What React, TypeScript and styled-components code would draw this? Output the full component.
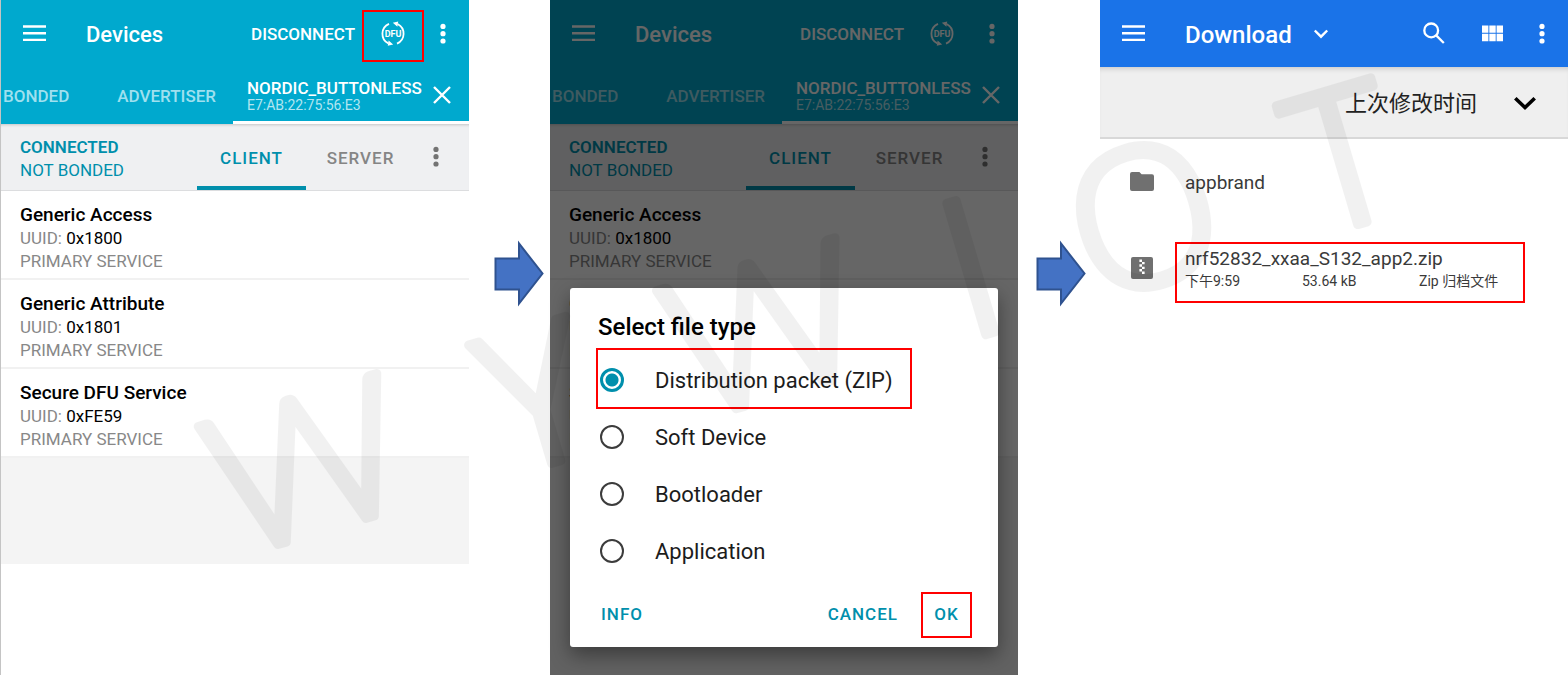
import React from 'react';
import styled, { createGlobalStyle, css } from 'styled-components';

const GlobalStyle = createGlobalStyle`
  *, *::before, *::after { box-sizing: border-box; }
  body {
    margin: 0;
    background: #fff;
    color: #000;
    font-family: Roboto, "Noto Sans CJK SC", sans-serif;
  }
  button, select, input { font: inherit; color: inherit; }
  h1, h2, h3, p, ul { margin: 0; padding: 0; }
  ul { list-style: none; }
`;

const Page = styled.main`
  position: relative;
  display: grid;
  grid-template-columns: minmax(0, 469fr) 81px minmax(0, 468fr) 82px minmax(0, 468fr);
  min-height: 100vh;
  overflow: hidden;
`;

/* ---------- shared controls ---------- */

const highlight = css`
  &::after {
    content: '';
    position: absolute;
    border: 2px solid #ff0000;
    pointer-events: none;
  }
`;

const IconButton = styled.button<{ $width: number }>`
  position: relative;
  display: flex;
  align-items: center;
  justify-content: center;
  flex: none;
  width: ${(p) => p.$width}px;
  height: 46px;
  padding: 0;
  border: 0;
  background: none;
`;

const DfuButton = styled(IconButton)<{ $marked?: boolean }>`
  ${(p) => p.$marked && highlight}
  &::after { inset: -1px 0 -5px; }
`;

const Toolbar = styled.header<{ $color: string }>`
  display: flex;
  align-items: center;
  height: 67px;
  padding: 0 7px 0 10px;
  background: ${(p) => p.$color};
  color: #fff;
`;

const ToolbarTitle = styled.h1<{ $size: number }>`
  margin-left: 28px;
  padding-top: 2px;
  font-size: ${(p) => p.$size}px;
  font-weight: 500;
  line-height: 30px;
`;

const Spacer = styled.span`
  flex: 1;
`;

const TextAction = styled.button`
  margin-right: 7px;
  padding: 0;
  border: 0;
  background: none;
  font-size: 17px;
  font-weight: 500;
  line-height: 24px;
`;

/* ---------- device screens ---------- */

const Column = styled.section<{ $ruled?: boolean }>`
  display: grid;
  grid-template-columns: minmax(0, 1fr);
  align-items: start;
  border-left: ${(p) => (p.$ruled ? '1px solid #c4c4c4' : '0')};
`;

const DeviceScreen = styled.div<{ $full?: boolean }>`
  grid-area: 1 / 1;
  align-self: ${(p) => (p.$full ? 'stretch' : 'start')};
  padding-bottom: 106px;
  background: #f4f4f4;
  min-width: 0;
`;

const DeviceTabs = styled.nav`
  display: flex;
  align-items: stretch;
  justify-content: space-between;
  height: 57px;
  background: #00a9ce;
  color: #fff;
`;

const DeviceTab = styled.button`
  padding: 0 17px 0 2px;
  border: 0;
  background: none;
  color: #9fe0ef;
  font-size: 17px;
  font-weight: 500;
  line-height: 24px;
`;

const ActiveDevice = styled.div`
  display: flex;
  align-items: center;
  justify-content: space-between;
  width: 236px;
  padding: 2px 8px 0 14px;
  border-bottom: 3px solid #fff;
`;

const DeviceName = styled.button`
  padding: 2px 0 0;
  border: 0;
  background: none;
  text-align: left;
  font-size: 17px;
  font-weight: 500;
  line-height: 18px;
  white-space: nowrap;
`;

const DeviceAddress = styled.small`
  display: block;
  color: #b3e6f1;
  font-size: 14px;
  font-weight: 400;
  line-height: 16px;
`;

const ConnectionBar = styled.div`
  display: flex;
  align-items: stretch;
  height: 67px;
  padding: 0 12px 0 19px;
  border-bottom: 1px solid #dcdddf;
  background: #eff0f2;
  box-shadow: inset 0 3px 3px -2px rgba(0, 0, 0, 0.18);
`;

const ConnectionState = styled.p`
  flex: 1;
  align-self: center;
  padding-top: 3px;
  color: #008fac;
  font-size: 17px;
  line-height: 23px;
  white-space: nowrap;
`;

const StateStrong = styled.strong`
  display: block;
  font-weight: 600;
`;

const RoleTab = styled.button<{ $active?: boolean }>`
  width: 109px;
  padding: 6px 0 0;
  border: 0;
  border-bottom: 4px solid ${(p) => (p.$active ? '#008fac' : 'transparent')};
  background: none;
  color: ${(p) => (p.$active ? '#008fac' : '#858585')};
  font-size: 17px;
  font-weight: 500;
  letter-spacing: 1px;
`;

const MoreRoles = styled(IconButton)`
  align-self: center;
  color: #737373;
`;

const ServiceItem = styled.li`
  padding: 12px 19px 5px;
  border-bottom: 2px solid #f1f1f1;
  background: #fff;
`;

const ServiceName = styled.h2`
  font-size: 19px;
  font-weight: 500;
  line-height: 24px;
`;

const ServiceLine = styled.p`
  color: #888;
  font-size: 17px;
  line-height: 23px;
`;

const Uuid = styled.span`
  color: #000;
`;

/* ---------- file type dialog ---------- */

const Scrim = styled.div`
  grid-area: 1 / 1;
  z-index: 1;
  display: flex;
  align-items: flex-end;
  align-self: stretch;
  padding: 28px 20px;
  background: rgba(0, 0, 0, 0.6);
`;

const Dialog = styled.form`
  flex: 1;
  min-width: 0;
  padding: 24px 26px 9px;
  border-radius: 3px;
  background: #fff;
  box-shadow: 0 8px 20px rgba(0, 0, 0, 0.4);
`;

const DialogTitle = styled.h2`
  margin: 0 0 9px 2px;
  font-size: 24px;
  font-weight: 500;
  line-height: 30px;
`;

const Options = styled.fieldset`
  margin: 0;
  padding: 0;
  border: 0;
`;

const Option = styled.label<{ $marked?: boolean }>`
  position: relative;
  display: flex;
  align-items: center;
  gap: 31px;
  max-width: 316px;
  height: 57px;
  padding: 1px 0 0 4px;
  color: #1c1c1c;
  font-size: 22px;
  line-height: 28px;
  ${(p) => p.$marked && highlight}
  &::after { inset: -3px 0 -1px; }
`;

const OptionText = styled.span`
  padding-top: 2px;
`;

const Radio = styled.input`
  appearance: none;
  flex: none;
  width: 24px;
  height: 24px;
  margin: 0;
  border: 2px solid #3c3c3c;
  border-radius: 50%;
  &:checked {
    border: 3px solid #008fac;
    background: radial-gradient(circle, #008fac 6px, transparent 7px);
  }
`;

const DialogActions = styled.div`
  display: flex;
  align-items: center;
  margin-top: 13px;
`;

const DialogButton = styled.button<{ $marked?: boolean }>`
  height: 46px;
  padding: 0 5px 2px;
  border: 0;
  background: none;
  color: #008fac;
  font-size: 17px;
  font-weight: 500;
  letter-spacing: 1px;
  ${(p) =>
    p.$marked &&
    css`
      width: 51px;
      margin-left: 18px;
      border: 2px solid #ff0000;
    `}
`;

/* ---------- file browser ---------- */

const SortBar = styled.div`
  display: flex;
  align-items: center;
  justify-content: flex-end;
  height: 72px;
  padding: 2px 20px 0 0;
  border-bottom: 2px solid #d8d8d8;
  background: #efefef;
  box-shadow: inset 0 5px 5px -3px rgba(0, 0, 0, 0.15);
`;

const SortSelect = styled.select`
  appearance: none;
  margin-right: 24px;
  padding: 2px 0 0;
  border: 0;
  background: none;
  color: #222;
  font-size: 22px;
  line-height: 32px;
`;

const FolderSelect = styled.button`
  display: flex;
  align-items: center;
  gap: 20px;
  padding: 0;
  border: 0;
  background: none;
`;

const FileRow = styled.li`
  display: flex;
  align-items: center;
  height: 86px;
  padding: 0 43px 0 30px;
  color: #3a3a3a;
`;

const FileLink = styled.a<{ $marked?: boolean }>`
  position: relative;
  flex: 1;
  min-width: 0;
  margin-left: 21px;
  padding: 2px 0 0 10px;
  color: inherit;
  text-decoration: none;
  ${(p) => p.$marked && highlight}
  &::after { inset: -3px 0 -12px; }
`;

const FileName = styled.span`
  display: block;
  font-size: 19px;
  line-height: 24px;
`;

const FileMeta = styled.span`
  display: grid;
  grid-template-columns: 117px 117px minmax(0, 1fr);
  font-size: 14px;
  line-height: 20px;
  white-space: nowrap;
`;

/* ---------- overlays between and above the screens ---------- */

const ArrowGutter = styled.div<{ $side: 'center' | 'flex-end' }>`
  display: flex;
  align-items: flex-start;
  justify-content: ${(p) => p.$side};
  padding: 240px 6px 0 10px;
`;

const Watermark = styled.svg`
  position: absolute;
  top: 0;
  left: 0;
  z-index: 2;
  width: 100%;
  pointer-events: none;
`;

/* ---------- icons ---------- */

const MenuIcon = () => (
  <svg width="24" height="24" viewBox="0 0 24 24" fill="currentColor" aria-hidden="true">
    <path d="M0 3.3h23v2.4H0zM0 10h23v2.4H0zM0 16.7h23v2.4H0z" />
  </svg>
);

const MoreIcon = () => (
  <svg width="24" height="24" viewBox="0 0 24 24" fill="currentColor" aria-hidden="true">
    <circle cx="12" cy="4.4" r="2.6" />
    <circle cx="12" cy="11.7" r="2.6" />
    <circle cx="12" cy="19" r="2.6" />
  </svg>
);

const DfuIcon = () => (
  <svg width="26" height="26" viewBox="0 0 26 26" fill="none" stroke="currentColor" strokeWidth="1.8" aria-hidden="true">
    <path d="M9 2.8A10.8 10.8 0 0 0 8.4 22.4M17 22.6A10.8 10.8 0 0 0 17.6 3" />
    <path d="M8.6 19.6l4.6 4-5.4 1.2zM17.4 5.8l-4.6-4 5.4-1.2z" fill="currentColor" stroke="none" />
    <text
      x="13"
      y="16"
      textAnchor="middle"
      fontFamily='"Liberation Sans Narrow", Roboto, sans-serif'
      fontSize="9"
      fontWeight="700"
      fill="currentColor"
      stroke="none"
    >
      DFU
    </text>
  </svg>
);

const CloseIcon = () => (
  <svg width="20" height="20" viewBox="0 0 20 20" stroke="currentColor" strokeWidth="2.4" aria-hidden="true">
    <path d="M2 2l16 16M18 2L2 18" />
  </svg>
);

const SmallChevron = () => (
  <svg width="18" height="18" viewBox="0 0 18 18" fill="none" stroke="currentColor" strokeWidth="2.4" aria-hidden="true">
    <path d="M2.8 5.5L9 11.7l6.2-6.2" />
  </svg>
);

const BoldChevron = () => (
  <svg width="24" height="24" viewBox="0 0 24 24" fill="none" stroke="#000" strokeWidth="3.6" aria-hidden="true">
    <path d="M2.3 7.2L12 16.6l9.7-9.4" />
  </svg>
);

const SearchIcon = () => (
  <svg width="24" height="24" viewBox="0 0 24 24" fill="none" stroke="currentColor" strokeWidth="2.3" aria-hidden="true">
    <circle cx="9.2" cy="8.4" r="6.9" />
    <path d="M14.2 13.4l7.6 7.6" />
  </svg>
);

const GridIcon = () => (
  <svg width="24" height="24" viewBox="0 0 24 24" fill="currentColor" aria-hidden="true">
    <path d="M1 3.4h6.4v7.4H1zM8.3 3.4h6.4v7.4H8.3zM15.6 3.4H22v7.4h-6.4zM1 11.8h6.4v7.4H1zM8.3 11.8h6.4v7.4H8.3zM15.6 11.8H22v7.4h-6.4z" />
  </svg>
);

const FolderIcon = () => (
  <svg width="24" height="24" viewBox="0 0 24 24" fill="#707070" aria-hidden="true">
    <path d="M2 2h7.4l2.2 2.2H22a2 2 0 0 1 2 2V19a2 2 0 0 1-2 2H2a2 2 0 0 1-2-2V4a2 2 0 0 1 2-2z" />
  </svg>
);

const ArchiveIcon = () => (
  <svg width="24" height="24" viewBox="0 0 24 24" aria-hidden="true">
    <rect x="1" y="1" width="22" height="22" rx="2" fill="#707070" />
    <path
      d="M9.4 3.5H12v2.4H9.4zM12 5.9h2.6v2.4H12zM9.4 8.3H12v2.4H9.4zM12 10.7h2.6v2.4H12zM9.4 13.1H12v2.4H9.4zM12 15.5h2.6v2.4H12z"
      fill="#fff"
    />
  </svg>
);

const StepArrow = () => (
  <svg width="50" height="68" viewBox="0 0 50 68" aria-hidden="true">
    <path
      d="M1.5 18.5h23.5V3.5L48.5 33.5 25 63.5V49.5H1.5z"
      fill="#4472c4"
      stroke="#2f528f"
      strokeWidth="2"
    />
  </svg>
);

/* ---------- content ---------- */

const services = [
  { name: 'Generic Access', uuid: '0x1800' },
  { name: 'Generic Attribute', uuid: '0x1801' },
  { name: 'Secure DFU Service', uuid: '0xFE59' },
];

const fileTypes = ['Distribution packet (ZIP)', 'Soft Device', 'Bootloader', 'Application'];

const watermarkLetters: Array<[string, number, string]> = [
  ['W', 162, 'Lato'],
  ['Y', 402, 'Open Sans'],
  ['W', 640, 'Lato'],
  ['I', 855, 'Open Sans'],
  ['O', 1035, 'Open Sans'],
  ['T', 1243, 'Open Sans'],
];

function Devices({ full, markDfu }: { full?: boolean; markDfu?: boolean }) {
  return (
    <DeviceScreen $full={full}>
      <Toolbar $color="#00a9ce">
        <IconButton $width={47} aria-label="Menu">
          <MenuIcon />
        </IconButton>
        <ToolbarTitle $size={22}>Devices</ToolbarTitle>
        <Spacer />
        <TextAction>DISCONNECT</TextAction>
        <DfuButton $width={62} $marked={markDfu} aria-label="Start DFU">
          <DfuIcon />
        </DfuButton>
        <IconButton $width={38} aria-label="More">
          <MoreIcon />
        </IconButton>
      </Toolbar>
      <DeviceTabs>
        <DeviceTab>BONDED</DeviceTab>
        <Spacer />
        <DeviceTab>ADVERTISER</DeviceTab>
        <ActiveDevice>
          <DeviceName>
            NORDIC_BUTTONLESS
            <DeviceAddress>E7:AB:22:75:56:E3</DeviceAddress>
          </DeviceName>
          <IconButton $width={40} aria-label="Close tab">
            <CloseIcon />
          </IconButton>
        </ActiveDevice>
      </DeviceTabs>
      <ConnectionBar>
        <ConnectionState>
          <StateStrong>CONNECTED</StateStrong>
          NOT BONDED
        </ConnectionState>
        <RoleTab $active>CLIENT</RoleTab>
        <RoleTab>SERVER</RoleTab>
        <MoreRoles $width={42} aria-label="More options">
          <MoreIcon />
        </MoreRoles>
      </ConnectionBar>
      <ul>
        {services.map((s) => (
          <ServiceItem key={s.uuid}>
            <ServiceName>{s.name}</ServiceName>
            <ServiceLine>
              UUID: <Uuid>{s.uuid}</Uuid>
            </ServiceLine>
            <ServiceLine>PRIMARY SERVICE</ServiceLine>
          </ServiceItem>
        ))}
      </ul>
    </DeviceScreen>
  );
}

function FileTypeDialog() {
  return (
    <Scrim>
      <Dialog role="dialog" aria-labelledby="file-type-title">
        <DialogTitle id="file-type-title">Select file type</DialogTitle>
        <Options aria-labelledby="file-type-title">
          {fileTypes.map((label, i) => (
            <Option key={label} $marked={i === 0}>
              <Radio type="radio" name="file-type" defaultChecked={i === 0} />
              <OptionText>{label}</OptionText>
            </Option>
          ))}
        </Options>
        <DialogActions>
          <DialogButton type="button">INFO</DialogButton>
          <Spacer />
          <DialogButton type="button">CANCEL</DialogButton>
          <DialogButton type="button" $marked>
            OK
          </DialogButton>
        </DialogActions>
      </Dialog>
    </Scrim>
  );
}

function FileBrowser() {
  return (
    <div>
      <Toolbar $color="#1a73e8">
        <IconButton $width={47} aria-label="Menu">
          <MenuIcon />
        </IconButton>
        <FolderSelect>
          <ToolbarTitle as="span" $size={24}>
            Download
          </ToolbarTitle>
          <SmallChevron />
        </FolderSelect>
        <Spacer />
        <IconButton $width={58} aria-label="Search">
          <SearchIcon />
        </IconButton>
        <IconButton $width={60} aria-label="Grid view">
          <GridIcon />
        </IconButton>
        <IconButton $width={38} aria-label="More">
          <MoreIcon />
        </IconButton>
      </Toolbar>
      <SortBar>
        <SortSelect aria-label="排序">
          <option>上次修改时间</option>
        </SortSelect>
        <IconButton $width={46} aria-label="降序">
          <BoldChevron />
        </IconButton>
      </SortBar>
      <ul>
        <FileRow>
          <FolderIcon />
          <FileLink href="#appbrand">
            <FileName>appbrand</FileName>
          </FileLink>
        </FileRow>
        <FileRow>
          <ArchiveIcon />
          <FileLink href="#archive" $marked>
            <FileName>nrf52832_xxaa_S132_app2.zip</FileName>
            <FileMeta>
              <span>下午9:59</span>
              <span>53.64 kB</span>
              <span>Zip 归档文件</span>
            </FileMeta>
          </FileLink>
        </FileRow>
      </ul>
    </div>
  );
}

export default function App() {
  return (
    <>
      <GlobalStyle />
      <Page>
        <Column $ruled>
          <Devices markDfu />
        </Column>
        <ArrowGutter $side="flex-end">
          <StepArrow />
        </ArrowGutter>
        <Column>
          <Devices full />
          <FileTypeDialog />
        </Column>
        <ArrowGutter $side="center">
          <StepArrow />
        </ArrowGutter>
        <Column>
          <FileBrowser />
        </Column>
        <Watermark viewBox="0 0 1568 675" aria-hidden="true">
          <g
            transform="rotate(-16.5)"
            opacity="0.05"
            fill="#000"
            stroke="#000"
            strokeWidth="9"
            strokeLinejoin="round"
            fontWeight="300"
            fontSize="192"
            textAnchor="middle"
          >
            {watermarkLetters.map(([letter, x, family]) => (
              <text key={x} x={x} y="601" fontFamily={`"${family}", sans-serif`}>
                {letter}
              </text>
            ))}
          </g>
        </Watermark>
      </Page>
    </>
  );
}
